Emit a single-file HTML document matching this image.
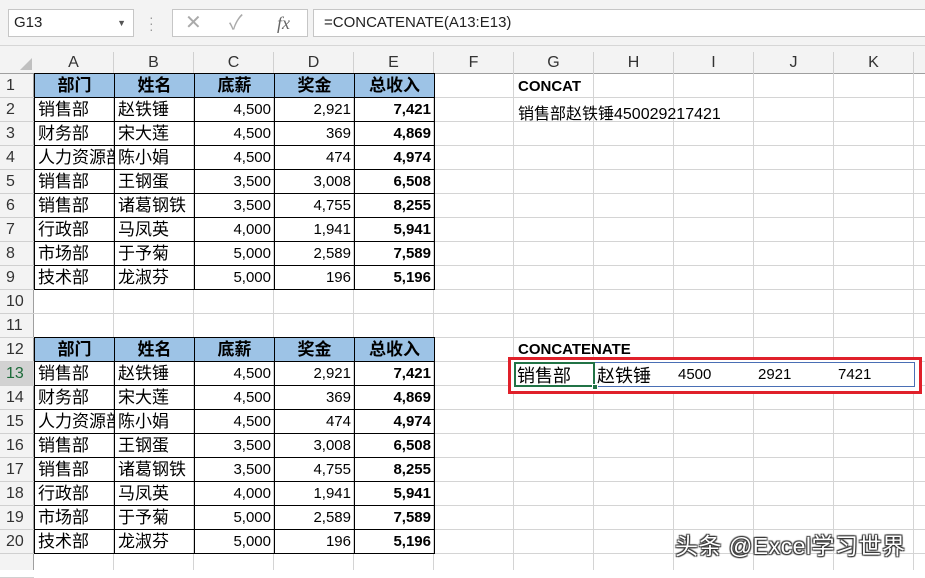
<!DOCTYPE html>
<html><head><meta charset="utf-8"><style>
*{margin:0;padding:0;box-sizing:border-box}
body{width:925px;height:570px;overflow:hidden;background:#fff;position:relative;font-family:"Liberation Sans","Noto Sans CJK SC",sans-serif}
.top{position:absolute;left:0;top:0;width:925px;height:46px;background:#f3f3f3;border-bottom:1px solid #d6d6d6}
.box{position:absolute;background:#fff;border:1px solid #c6c6c6}
.colhdr{position:absolute;left:0;top:46px;width:925px;height:28px;background:#f3f3f3;border-bottom:1px solid #9f9f9f}
.rowhdr{position:absolute;left:0;top:74px;width:34px;height:496px;background:#f3f3f3;border-right:1px solid #9f9f9f}
.grid{position:absolute;left:34px;top:74px;width:891px;height:496px;
background-image:repeating-linear-gradient(to right,transparent 0 79px,#d4d4d4 79px 80px),repeating-linear-gradient(to bottom,transparent 0 23px,#d4d4d4 23px 24px)}
.ch{position:absolute;top:52px;height:22px;width:80px;text-align:center;font-size:16px;color:#333;line-height:22px;border-right:1px solid #d0d0d0}
.rh{position:absolute;left:0;width:34px;height:24px;font-size:16px;color:#333;line-height:24px;text-align:left;padding-left:6px;border-bottom:1px solid #d0d0d0}
table.d{position:absolute;left:34px;border-collapse:collapse;table-layout:fixed;width:401px}
table.d td{border:1px solid #000;width:80px;max-width:80px;height:24px;font-size:17px;padding:0 3px;white-space:nowrap;overflow:hidden;line-height:22px}
table.d tr.h td{background:#9dc3e6;font-weight:bold;text-align:center;font-size:17px}
td.n{text-align:right;font-size:15px!important}
td.b{font-weight:bold}
.t{position:absolute;font-size:16px;white-space:nowrap}
</style></head><body>
<div class="top"></div>
<div class="box" style="left:8px;top:9px;width:126px;height:28px;font-size:15px;line-height:26px;padding-left:5px;color:#222">G13<span style="position:absolute;right:7px;top:0;font-size:9px;color:#555">▼</span></div>
<div style="position:absolute;left:149px;top:14px;color:#999;font-size:14px;line-height:6px">·<br>·<br>·</div>
<div class="box" style="left:172px;top:9px;width:136px;height:28px;color:#aaa;font-size:20px;line-height:26px">
<span style="position:absolute;left:12px">✕</span><span style="position:absolute;left:56px">✓</span><span style="position:absolute;left:104px;font-family:'Liberation Serif',serif;font-style:italic;color:#666;font-size:18px">fx</span></div>
<div class="box" style="left:313px;top:9px;width:620px;height:28px;font-size:15px;line-height:26px;padding-left:10px;color:#222">=CONCATENATE(A13:E13)</div>
<div class="colhdr"></div>
<div style="position:absolute;left:20px;top:58px;width:0;height:0;border-left:12px solid transparent;border-bottom:12px solid #c0c0c0"></div>
<div class="ch" style="left:34px">A</div><div class="ch" style="left:114px">B</div><div class="ch" style="left:194px">C</div><div class="ch" style="left:274px">D</div><div class="ch" style="left:354px">E</div><div class="ch" style="left:434px">F</div><div class="ch" style="left:514px">G</div><div class="ch" style="left:594px">H</div><div class="ch" style="left:674px">I</div><div class="ch" style="left:754px">J</div><div class="ch" style="left:834px">K</div>
<div class="rowhdr"></div>
<div class="grid"></div>
<div class="rh" style="top:74px">1</div><div class="rh" style="top:98px">2</div><div class="rh" style="top:122px">3</div><div class="rh" style="top:146px">4</div><div class="rh" style="top:170px">5</div><div class="rh" style="top:194px">6</div><div class="rh" style="top:218px">7</div><div class="rh" style="top:242px">8</div><div class="rh" style="top:266px">9</div><div class="rh" style="top:290px">10</div><div class="rh" style="top:314px">11</div><div class="rh" style="top:338px">12</div><div class="rh" style="top:362px;background:#d2d2d2;color:#1d6b3a">13</div><div class="rh" style="top:386px">14</div><div class="rh" style="top:410px">15</div><div class="rh" style="top:434px">16</div><div class="rh" style="top:458px">17</div><div class="rh" style="top:482px">18</div><div class="rh" style="top:506px">19</div><div class="rh" style="top:530px">20</div><div class="rh" style="top:554px"></div>

<table class="d" style="top:73px">
<colgroup><col style="width:80px"><col style="width:80px"><col style="width:80px"><col style="width:80px"><col style="width:80px"></colgroup>
<tr class="h"><td>部门</td><td>姓名</td><td>底薪</td><td>奖金</td><td>总收入</td></tr>
<tr><td>销售部</td><td>赵铁锤</td><td class="n">4,500</td><td class="n">2,921</td><td class="n b">7,421</td></tr>
<tr><td>财务部</td><td>宋大莲</td><td class="n">4,500</td><td class="n">369</td><td class="n b">4,869</td></tr>
<tr><td>人力资源部</td><td>陈小娟</td><td class="n">4,500</td><td class="n">474</td><td class="n b">4,974</td></tr>
<tr><td>销售部</td><td>王钢蛋</td><td class="n">3,500</td><td class="n">3,008</td><td class="n b">6,508</td></tr>
<tr><td>销售部</td><td>诸葛钢铁</td><td class="n">3,500</td><td class="n">4,755</td><td class="n b">8,255</td></tr>
<tr><td>行政部</td><td>马凤英</td><td class="n">4,000</td><td class="n">1,941</td><td class="n b">5,941</td></tr>
<tr><td>市场部</td><td>于予菊</td><td class="n">5,000</td><td class="n">2,589</td><td class="n b">7,589</td></tr>
<tr><td>技术部</td><td>龙淑芬</td><td class="n">5,000</td><td class="n">196</td><td class="n b">5,196</td></tr>
</table>
<table class="d" style="top:337px">
<colgroup><col style="width:80px"><col style="width:80px"><col style="width:80px"><col style="width:80px"><col style="width:80px"></colgroup>
<tr class="h"><td>部门</td><td>姓名</td><td>底薪</td><td>奖金</td><td>总收入</td></tr>
<tr><td>销售部</td><td>赵铁锤</td><td class="n">4,500</td><td class="n">2,921</td><td class="n b">7,421</td></tr>
<tr><td>财务部</td><td>宋大莲</td><td class="n">4,500</td><td class="n">369</td><td class="n b">4,869</td></tr>
<tr><td>人力资源部</td><td>陈小娟</td><td class="n">4,500</td><td class="n">474</td><td class="n b">4,974</td></tr>
<tr><td>销售部</td><td>王钢蛋</td><td class="n">3,500</td><td class="n">3,008</td><td class="n b">6,508</td></tr>
<tr><td>销售部</td><td>诸葛钢铁</td><td class="n">3,500</td><td class="n">4,755</td><td class="n b">8,255</td></tr>
<tr><td>行政部</td><td>马凤英</td><td class="n">4,000</td><td class="n">1,941</td><td class="n b">5,941</td></tr>
<tr><td>市场部</td><td>于予菊</td><td class="n">5,000</td><td class="n">2,589</td><td class="n b">7,589</td></tr>
<tr><td>技术部</td><td>龙淑芬</td><td class="n">5,000</td><td class="n">196</td><td class="n b">5,196</td></tr>
</table>

<div class="t" style="left:518px;top:78px;font-weight:bold;font-size:15px">CONCAT</div>
<div class="t" style="left:518px;top:100px">销售部赵铁锤450029217421</div>
<div class="t" style="left:518px;top:341px;font-weight:bold;font-size:15px">CONCATENATE</div>

<div style="position:absolute;left:508px;top:357px;width:414px;height:37px;border:3px solid #e0202a;background:#fff"></div>
<div style="position:absolute;left:514px;top:362px;width:401px;height:25px;border:1px solid #4a6fb5"></div>
<div style="position:absolute;left:514px;top:362px;width:81px;height:25px;border:2px solid #217346"></div>
<div style="position:absolute;left:592px;top:384px;width:6px;height:6px;background:#217346;border:1px solid #fff"></div>
<div class="t" style="left:517px;top:362px;font-size:18px">销售部</div>
<div class="t" style="left:597px;top:362px;font-size:18px">赵铁锤</div>
<div class="t" style="left:678px;top:366px;font-size:15px">4500</div>
<div class="t" style="left:758px;top:366px;font-size:15px">2921</div>
<div class="t" style="left:838px;top:366px;font-size:15px">7421</div>

<div class="t" style="left:675px;top:527px;font-size:23px;letter-spacing:0.5px;color:#fff;text-shadow:1px 1px 1px #333,-1px -1px 1px #333,1px -1px 1px #333,-1px 1px 1px #333">头条 @Excel学习世界</div>
</body></html>
